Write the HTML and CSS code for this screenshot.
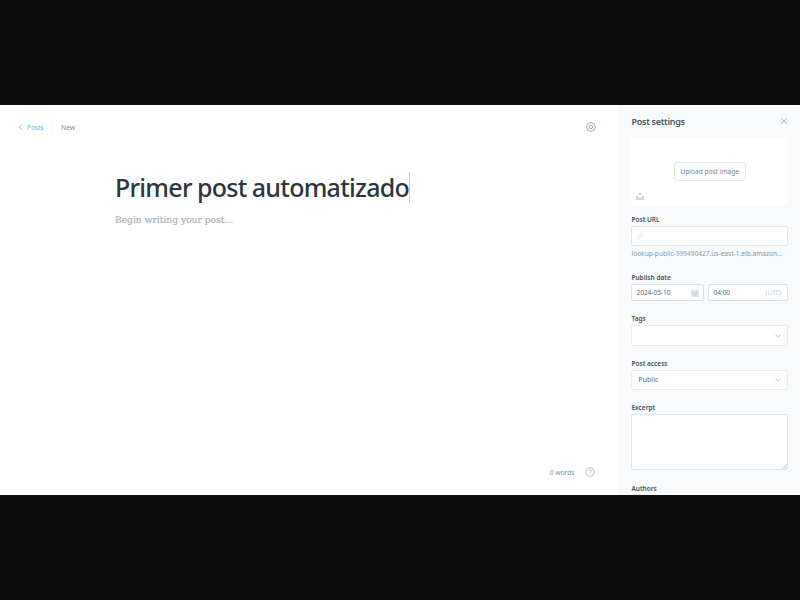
FILE: index.html
```
<!DOCTYPE html>
<html lang="en">
<head>
<meta charset="utf-8">
<title>Post editor</title>
<link rel="stylesheet" href="styles.css">
</head>
<body>
<div class="app">
  <main class="editor">
    <header class="topbar">
      <a class="back"><svg class="chevron" viewBox="0 0 5 8"><path d="M4.200 1 1 4l3.200 3"/></svg><span>Posts</span></a>
      <span class="status">New</span>
      <svg class="gear" viewBox="0 0 24 24"><path d="M10 1.500h4l.7 3 2 .9 2.700-1.600 2.800 2.800-1.600 2.700.9 2 3 .7v4l-3 .7-.9 2 1.600 2.700-2.800 2.800-2.700-1.600-2 .9-.7 3h-4l-.7-3-2-.9-2.700 1.600-2.800-2.800 1.600-2.700-.9-2-3-.7v-4l3-.7.9-2-1.600-2.700 2.800-2.800 2.700 1.600 2-.9z" transform="translate(1.200 -.6) scale(.9)"/><circle cx="12" cy="12" r="4"/></svg>
    </header>
    <article class="document">
      <h1><span>Primer post automatizado</span></h1>
      <p><span>Begin writing your post...</span></p>
    </article>
    <footer class="wordbar">
      <span class="count">0 words</span>
      <svg class="help" viewBox="0 0 10 10"><circle cx="5" cy="5" r="4.300"/><path d="M3.700 4c0-1.700 2.700-1.700 2.700 0C6.400 5 5 4.900 5 6.100M5 7v.7"/></svg>
    </footer>
  </main>
  <aside class="settings">
    <header class="settings-head">
      <h2>Post settings</h2>
      <svg class="close" viewBox="0 0 8 8"><path d="m1 1 6 6M7 1 1 7"/></svg>
    </header>
    <div class="upload">
      <button><span>Upload post image</span></button>
      <svg class="unsplash" viewBox="0 0 8 7"><path d="M2.500 0h3v2h-3zM0 3h2.500v2h3V3H8v4H0z"/></svg>
    </div>
    <section class="field url">
      <label>Post URL</label>
      <div class="box"><svg class="link" viewBox="0 0 8 8"><path d="M3.400 4.600 5 3M3.500 2.600 4.800 1.300a1.350 1.350 0 0 1 1.900 1.900L5.200 4.600M4.500 5.400 3.200 6.700a1.350 1.350 0 0 1-1.900-1.900L2.800 3.400"/></svg></div>
      <p class="hint">lookup-public-999490427.us-east-1.elb.amazon...</p>
    </section>
    <section class="field date">
      <label>Publish date</label>
      <div class="pair">
        <div class="box day"><span>2024-05-10</span><svg class="calendar" viewBox="0 0 8 8"><path class="fill" d="M1 2.500h6v5H1z"/><path d="M.5 1.500h7v6h-7zM.5 3h7M2 0v2M6 0v2M3 3v4.500M5 3v4.500M1 5h6"/></svg></div>
        <div class="box time"><span>04:00</span><span class="zone">(UTC)</span></div>
      </div>
    </section>
    <section class="field tags">
      <label>Tags</label>
      <div class="box select"><span></span><svg class="arrow" viewBox="0 0 6 4"><path d="m.5.600 2.500 2.500L5.500.600"/></svg></div>
    </section>
    <section class="field access">
      <label>Post access</label>
      <div class="box select"><span>Public</span><svg class="arrow" viewBox="0 0 6 4"><path d="m.5.600 2.500 2.500L5.500.600"/></svg></div>
    </section>
    <section class="field excerpt">
      <label>Excerpt</label>
      <div class="box area"><svg class="grip" viewBox="0 0 5 5"><path d="M0 5 5 0M2.500 5 5 2.500"/></svg></div>
    </section>
    <section class="field authors"><label>Authors</label></section>
  </aside>
</div>
</body>
</html>
```
FILE: styles.css
```
* { box-sizing: border-box; margin: 0; padding: 0; }
body {
  width: 800px; height: 600px; overflow: hidden;
  padding: 105px 0; background: #0e0e0e;
  font-family: "Noto Sans", "Open Sans", sans-serif; font-size: 6.5px; color: #48535a;
}
svg { display: block; flex: none; fill: none; stroke: #90a4b0; stroke-width: .7; }
.app { display: flex; height: 390px; background: #fff; }
.editor { flex: 1; display: flex; flex-direction: column; }
.topbar { display: flex; align-items: center; height: 44px; padding: 0 22px 0 18px; }
.back { display: flex; align-items: center; gap: 4px; height: 19px; width: 35px; border-right: 1px solid #f8fafb; color: #6db4dd; }
.chevron { width: 5px; height: 8px; stroke: #6db4dd; }
.status { margin-left: 8px; color: #7c8b9a; font-size: 6.8px; }
.gear { width: 10px; height: 10px; margin-left: auto; stroke: #738a94; stroke-width: 1.700; }
.document { flex: 1; padding: 22px 0 0 115px; }
h1 { display: flex; height: 33px; align-items: center; font: 500 25px/33px "Noto Sans", sans-serif; letter-spacing: -.74px; word-spacing: -.5px; color: #2b373d; white-space: nowrap; }
h1 span { display: block; height: 31px; line-height: 31px; width: 295px; border-right: 1px solid #ccd0d3; }
.document p { margin-top: 8px; font: 10px/16px "DejaVu Serif Condensed", "DejaVu Serif", serif; letter-spacing: .07px; color: #a3b2bb; -webkit-text-stroke: .2px #a3b2bb; }
.wordbar { display: flex; justify-content: flex-end; align-items: center; gap: 11px; height: 45px; padding: 0 23px 1px 0; color: #7c929c; font-size: 6.7px; }
.help { width: 10px; height: 10px; stroke: #8499a4; stroke-width: .6; }
.settings { width: 181.55px; padding: 0 12px 0 13px; background: #f8fafc; overflow: hidden; }
.settings-head { display: flex; justify-content: space-between; align-items: center; height: 33px; }
h2 { font-size: 9px; font-weight: 600; letter-spacing: -.28px; line-height: 12px; color: #4b575e; }
.close { width: 8px; height: 8px; margin-top: -1px; stroke: #9aa8b0; }
.upload { position: relative; height: 67px; display: flex; align-items: center; justify-content: center; background: #fff; border-radius: 1px; }
.upload button { width: 72px; height: 19px; font: inherit; font-size: 6.600px; white-space: nowrap; color: #728792; background: #fff; border: 1px solid #dce9ec; border-radius: 3px; }
.unsplash { position: absolute; left: 5px; bottom: 5px; width: 8px; height: 7px; fill: #d2d2d2; stroke: none; }
.field label { display: block; height: 10px; font-size: 6.5px; font-weight: 600; line-height: 11px; }
.url { margin-top: 9px; }
.box { display: flex; align-items: center; justify-content: space-between; height: 20px; margin-top: 2px; padding: 0 5px 0 4px; background: #fff; border: 1px solid #dce6ed; border-radius: 2px; color: #5c6870; }
.link { width: 8px; height: 8px; stroke: #d0dae0; }
.hint { margin-top: 3px; line-height: 10px; font-size: 6.5px; letter-spacing: .04px; color: #849ba5; white-space: nowrap; }
.date { margin-top: 13px; }
.pair { display: flex; gap: 4px; }
.pair .box { height: 17px; border-color: #d5e4ed; }
.day { width: 73px; }
.day .calendar { margin-right: -1px; }
.time { flex: 1; }
.time.box { padding-right: 6px; }
.calendar { width: 8px; height: 8px; stroke: #c5ced4; stroke-width: .5; }
.calendar .fill { fill: #dce2e6; stroke: none; }
.zone { color: #c3ccd2; font-size: 6.2px; }
.tags { margin-top: 12px; }
.select { height: 21px; margin-top: 2px; padding: 0 6px; border-color: #e5edf1; }
.tags .select { height: 21px; }
.access .select { height: 20px; }
.select span { font-size: 7px; }
.arrow { width: 6px; height: 4px; stroke: #a5b5be; }
.access { margin-top: 12px; }
.access .select { margin-top: 1.500px; }
.excerpt { margin-top: 12.500px; }
.area { height: 56px; position: relative; }
.grip { position: absolute; right: 0; bottom: 0; width: 5px; height: 5px; stroke: #aaa; }
.authors { margin-top: 13px; }
```
